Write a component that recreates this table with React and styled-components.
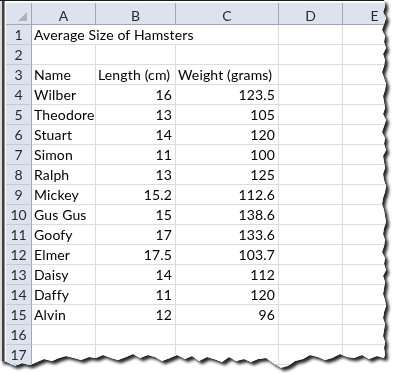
import styled, { createGlobalStyle } from 'styled-components';

const GlobalStyle = createGlobalStyle`
  html, body {
    margin: 0;
    padding: 0;
    background: #ffffff;
  }
  body {
    font-family: Lato, "Liberation Sans", Arial, sans-serif;
  }
`;

// torn paper edge (right side, then bottom)
const rightJitter = [384,385,383,386,384,382,385,384,386,383,385,384,382,384,386,385,383,384,385,383,386,384,382,385,384,386,383,384,385,383,384,386,385,383,382,384,385,386,384,383,385,384,382,385,384,386,383,385,384,383,385,386,384,383,385,384,383,385,384,385];
const bottomJitter = [358,356,359,355,358,357,354,358,360,357,355,359,361,366,368,363,358,359,362,359,361,357,362,359,357,361,356,359,355,358,361,357,355,358,354,357,360,358,355,358,357,360,358,356,358,361,359,362,365,363,366,362,361];

const tornPath = (() => {
  const pts = ['0px 0px'];
  rightJitter.forEach((x, i) => pts.push(`${x}px ${i * 6}px`));
  const step = 384 / (bottomJitter.length - 1);
  bottomJitter.forEach((y, i) => pts.push(`${Math.round(384 - i * step)}px ${y}px`));
  pts.push('0px 362px');
  return `polygon(${pts.join(', ')})`;
})();

const Page = styled.div`
  width: 395px;
  height: 373px;
  overflow: hidden;
`;

const Paper = styled.div`
  filter: drop-shadow(3px 3px 1.5px rgba(0, 0, 0, 0.85));
`;

const Sheet = styled.div`
  width: 395px;
  height: 370px;
  clip-path: ${tornPath};
  border-top: 1px solid #1c1c1c;
  padding: 2px 0 0 6px;
  box-sizing: border-box;
  background: linear-gradient(to right, #dcdcdc 0 2px, #3f3f3f 2px 4px, #8c8c8c 4px 5px, #ffffff 5px);
  overflow: hidden;
`;

const Grid = styled.div`
  display: grid;
  grid-template-columns: 26px 64px 80px 103px 64px 64px;
  grid-template-rows: 22px repeat(17, 20px);
  background: #ffffff;
  width: max-content;
`;

const ColHead = styled.div`
  background: #dde3ee;
  border-right: 1px solid #9ea9b8;
  border-bottom: 1px solid #9ea9b8;
  display: flex;
  align-items: center;
  justify-content: center;
  font-size: 14px;
  color: #2a2a2a;
  padding-top: 3px;
  box-sizing: border-box;
`;

const Corner = styled(ColHead)`
  position: relative;
  &::after {
    content: '';
    position: absolute;
    right: 4px;
    bottom: 3px;
    width: 0;
    height: 0;
    border-left: 9px solid transparent;
    border-bottom: 9px solid #aeb3ba;
  }
`;

const RowHead = styled.div`
  background: #dde3ee;
  border-right: 1px solid #9ea9b8;
  border-bottom: 1px solid #c3cad6;
  display: flex;
  align-items: flex-end;
  justify-content: center;
  padding-bottom: 1px;
  font-size: 14px;
  color: #2a2a2a;
  box-sizing: border-box;
`;

const Cell = styled.div`
  grid-column: span ${(p) => p.$span || 1};
  border-right: 1px solid #dadcdd;
  border-bottom: 1px solid #dadcdd;
  display: flex;
  align-items: flex-end;
  justify-content: ${(p) => (p.$num ? 'flex-end' : 'flex-start')};
  padding: 0 3px 1px 2px;
  box-sizing: border-box;
  font-size: 14px;
  letter-spacing: 0.15px;
  color: #000000;
  white-space: nowrap;
`;

const columns = ['A', 'B', 'C', 'D', 'E'];

const hamsters = [
  ['Wilber', '16', '123.5'],
  ['Theodore', '13', '105'],
  ['Stuart', '14', '120'],
  ['Simon', '11', '100'],
  ['Ralph', '13', '125'],
  ['Mickey', '15.2', '112.6'],
  ['Gus Gus', '15', '138.6'],
  ['Goofy', '17', '133.6'],
  ['Elmer', '17.5', '103.7'],
  ['Daisy', '14', '112'],
  ['Daffy', '11', '120'],
  ['Alvin', '12', '96'],
];

const rows = [
  [{ text: 'Average Size of Hamsters', span: 3 }, {}, {}],
  [{}, {}, {}, {}, {}],
  [{ text: 'Name' }, { text: 'Length (cm)' }, { text: 'Weight (grams)' }, {}, {}],
  ...hamsters.map(([name, len, wt]) => [
    { text: name },
    { text: len, num: true },
    { text: wt, num: true },
    {},
    {},
  ]),
  [{}, {}, {}, {}, {}],
  [{}, {}, {}, {}, {}],
];

export default function App() {
  return (
    <Page>
      <GlobalStyle />
      <Paper>
        <Sheet>
          <Grid>
            <Corner />
            {columns.map((c) => (
              <ColHead key={c}>{c}</ColHead>
            ))}
            {rows.map((cells, r) => [
              <RowHead key={`h${r}`}>{r + 1}</RowHead>,
              ...cells.map((c, i) => (
                <Cell key={`${r}-${i}`} $span={c.span} $num={c.num}>
                  {c.text}
                </Cell>
              )),
            ])}
          </Grid>
        </Sheet>
      </Paper>
    </Page>
  );
}
